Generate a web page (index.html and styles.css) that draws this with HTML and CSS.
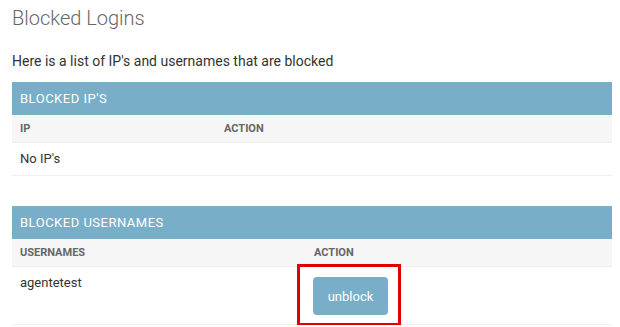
FILE: index.html
```html
<!DOCTYPE html>
<html lang="en">
<head>
  <meta charset="UTF-8" />
  <meta name="viewport" content="width=device-width, initial-scale=1.0"/>
  <title>Blocked Logins</title>
  <link rel="stylesheet" href="styles.css">
</head>
<body>
  <div class="content">
    <h1>Blocked Logins</h1>
    <p class="intro">Here is a list of IP's and usernames that are blocked</p>

    <table class="module ips">
      <caption>Blocked IP's</caption>
      <thead>
        <tr>
          <th class="col-first">IP</th>
          <th>Action</th>
        </tr>
      </thead>
      <tbody>
        <tr>
          <td>No IP's</td>
          <td></td>
        </tr>
      </tbody>
    </table>

    <table class="module users">
      <caption>Blocked Usernames</caption>
      <thead>
        <tr>
          <th class="col-first">Usernames</th>
          <th>Action</th>
        </tr>
      </thead>
      <tbody>
        <tr>
          <td>agentetest</td>
          <td class="action-cell">
            <button class="button">unblock</button>
            <span class="highlight"></span>
          </td>
        </tr>
      </tbody>
    </table>
  </div>
</body>
</html>
```

FILE: styles.css
```css
* {
  box-sizing: border-box;
}

body {
  margin: 0;
  padding: 0;
  background: #fff;
  color: #333;
  font-family: Roboto, "Liberation Sans", sans-serif;
  font-size: 14px;
  overflow: hidden;
}

.content {
  width: 600px;
  margin-left: 12px;
}

h1 {
  margin: 0;
  padding-top: 6px;
  font-size: 20px;
  line-height: 24px;
  font-weight: 300;
  color: #666;
}

.intro {
  margin: 21px 0 0;
  line-height: 20px;
}

.module {
  width: 100%;
  border-collapse: collapse;
  margin-top: 11px;
  margin-bottom: 30px;
}

.module.users {
  margin-bottom: 0;
}

.module caption {
  background: #79aec8;
  color: #fff;
  text-align: left;
  text-transform: uppercase;
  font-size: 13px;
  line-height: 17px;
  letter-spacing: 0.5px;
  padding: 8px;
}

.module th {
  background: #f6f6f6;
  color: #666;
  text-align: left;
  text-transform: uppercase;
  font-size: 11px;
  font-weight: 700;
  line-height: 17px;
  padding: 5px 8px;
  border-bottom: 1px solid #eee;
}

.module td {
  font-size: 13px;
  line-height: 16px;
  padding: 8px;
  vertical-align: top;
  border-bottom: 1px solid #eee;
}

.ips .col-first {
  width: 204px;
}

.users .col-first {
  width: 294px;
}

.action-cell {
  position: relative;
}

.button {
  display: block;
  width: 75px;
  height: 38px;
  margin: 2px 0 1px -1px;
  padding: 0;
  border: none;
  border-radius: 4px;
  background: #79aec8;
  color: #fff;
  font-family: Roboto, "Liberation Sans", sans-serif;
  font-size: 13px;
  cursor: pointer;
}

.highlight {
  position: absolute;
  left: -9px;
  top: -3px;
  width: 104px;
  height: 62px;
  border: 3px solid #e00000;
}
```
